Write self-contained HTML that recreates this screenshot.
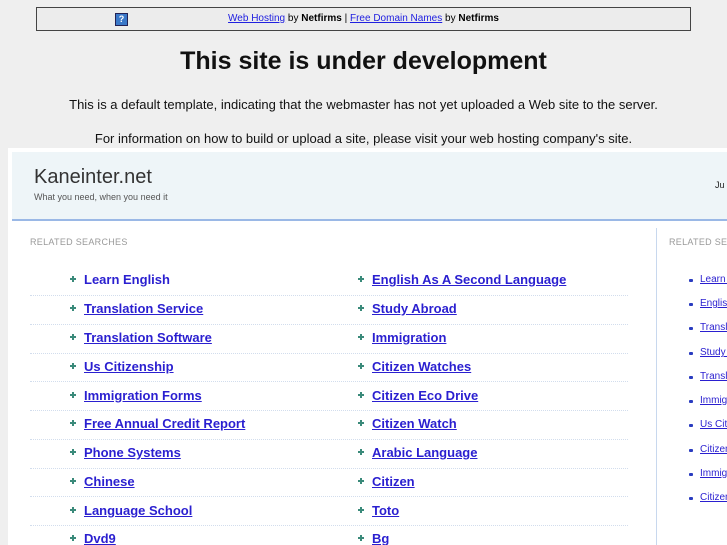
<!DOCTYPE html>
<html style="overflow:hidden"><head><meta charset="utf-8"><style>
body{margin:0;width:727px;height:545px;overflow:hidden;background:#efefef;font-family:"Liberation Sans",sans-serif;position:relative}
div{white-space:nowrap}
.ban{position:absolute;left:36px;top:7px;width:653px;height:22px;border:1px solid #444;background:#ececec;font-size:10px;line-height:22px;text-align:center;color:#000}
.ban a{color:#2020e0;text-decoration:underline}
.q{position:absolute;left:78px;top:5px;width:11px;height:11px;background:#3a78c8;border:1px solid #225;color:#fff;font-size:9px;line-height:11px;font-weight:bold}
h1{position:absolute;top:47px;left:0;width:727px;margin:0;text-align:center;font-size:25px;font-weight:bold;color:#111}
.p{position:absolute;left:0;width:727px;text-align:center;font-size:13px;color:#111}
.frame{position:absolute;left:8px;top:148px;width:719px;height:397px;background:#fff;overflow:hidden}
.hdr{position:absolute;left:4px;top:4px;width:715px;height:67px;background:#eef5f8;border-bottom:2px solid #9ab8e6}
.t{position:absolute;left:22px;top:14px;font-size:20px;color:#333}
.s{position:absolute;left:22px;top:40px;font-size:9px;color:#555}
.rs{position:absolute;font-size:9px;color:#999;letter-spacing:.3px}
.row{position:absolute;left:22px;width:598px;height:1px;border-top:1px dotted #d2dded}
.l{position:absolute;font-size:13px;font-weight:bold;color:#2a1fd0;text-decoration:underline}
.l:before{content:"";position:absolute;left:-14px;top:6px;width:6px;height:2px;background:#3a8a7a}
.l i{position:absolute;left:-12px;top:4px;width:2px;height:6px;background:#3a8a7a}
.r{position:absolute;left:692px;font-size:10px;color:#2a1fd0;text-decoration:underline}
.r:before{content:"";position:absolute;left:-11px;top:5px;width:4px;height:3px;background:#2a3cc0;border-radius:1px}
</style></head><body>
<div class="ban"><span class="q">?</span><a>Web Hosting</a> by <b>Netfirms</b> | <a>Free Domain Names</a> by <b>Netfirms</b></div>
<h1>This site is under development</h1>
<div class="p" style="top:97px">This is a default template, indicating that the webmaster has not yet uploaded a Web site to the server.</div>
<div class="p" style="top:131px">For information on how to build or upload a site, please visit your web hosting company's site.</div>
<div class="frame">
<div class="hdr"><div class="t">Kaneinter.net</div><div class="s">What you need, when you need it</div><div style="position:absolute;left:703px;top:28px;font-size:9px;color:#222">Ju</div></div>
<div style="position:absolute;left:648px;top:80px;width:1px;height:317px;background:#c8d8ee"></div>
<div class="rs" style="left:22px;top:89px">RELATED SEARCHES</div>
<div class="rs" style="left:661px;top:89px">RELATED SEARCHES</div>
<div class="row" style="top:147px"></div><div class="row" style="top:176px"></div><div class="row" style="top:205px"></div><div class="row" style="top:233px"></div><div class="row" style="top:262px"></div><div class="row" style="top:291px"></div><div class="row" style="top:320px"></div><div class="row" style="top:348px"></div><div class="row" style="top:377px"></div>
<div class="l" style="left:76px;top:124px;text-decoration:none"><i></i>Learn English</div>
<div class="l" style="left:76px;top:153px"><i></i>Translation Service</div>
<div class="l" style="left:76px;top:182px"><i></i>Translation Software</div>
<div class="l" style="left:76px;top:211px"><i></i>Us Citizenship</div>
<div class="l" style="left:76px;top:240px"><i></i>Immigration Forms</div>
<div class="l" style="left:76px;top:268px"><i></i>Free Annual Credit Report</div>
<div class="l" style="left:76px;top:297px"><i></i>Phone Systems</div>
<div class="l" style="left:76px;top:326px"><i></i>Chinese</div>
<div class="l" style="left:76px;top:355px"><i></i>Language School</div>
<div class="l" style="left:76px;top:383px"><i></i>Dvd9</div>
<div class="l" style="left:364px;top:124px"><i></i>English As A Second Language</div>
<div class="l" style="left:364px;top:153px"><i></i>Study Abroad</div>
<div class="l" style="left:364px;top:182px"><i></i>Immigration</div>
<div class="l" style="left:364px;top:211px"><i></i>Citizen Watches</div>
<div class="l" style="left:364px;top:240px"><i></i>Citizen Eco Drive</div>
<div class="l" style="left:364px;top:268px"><i></i>Citizen Watch</div>
<div class="l" style="left:364px;top:297px"><i></i>Arabic Language</div>
<div class="l" style="left:364px;top:326px"><i></i>Citizen</div>
<div class="l" style="left:364px;top:355px"><i></i>Toto</div>
<div class="l" style="left:364px;top:383px"><i></i>Bg</div>
<div class="r" style="top:126px">Learn English</div>
<div class="r" style="top:150px">English As</div>
<div class="r" style="top:174px">Translation</div>
<div class="r" style="top:199px">Study Abroad</div>
<div class="r" style="top:223px">Translation</div>
<div class="r" style="top:247px">Immigration</div>
<div class="r" style="top:271px">Us Citizenship</div>
<div class="r" style="top:296px">Citizen</div>
<div class="r" style="top:320px">Immigration</div>
<div class="r" style="top:344px">Citizen</div>
</div>
</body></html>
